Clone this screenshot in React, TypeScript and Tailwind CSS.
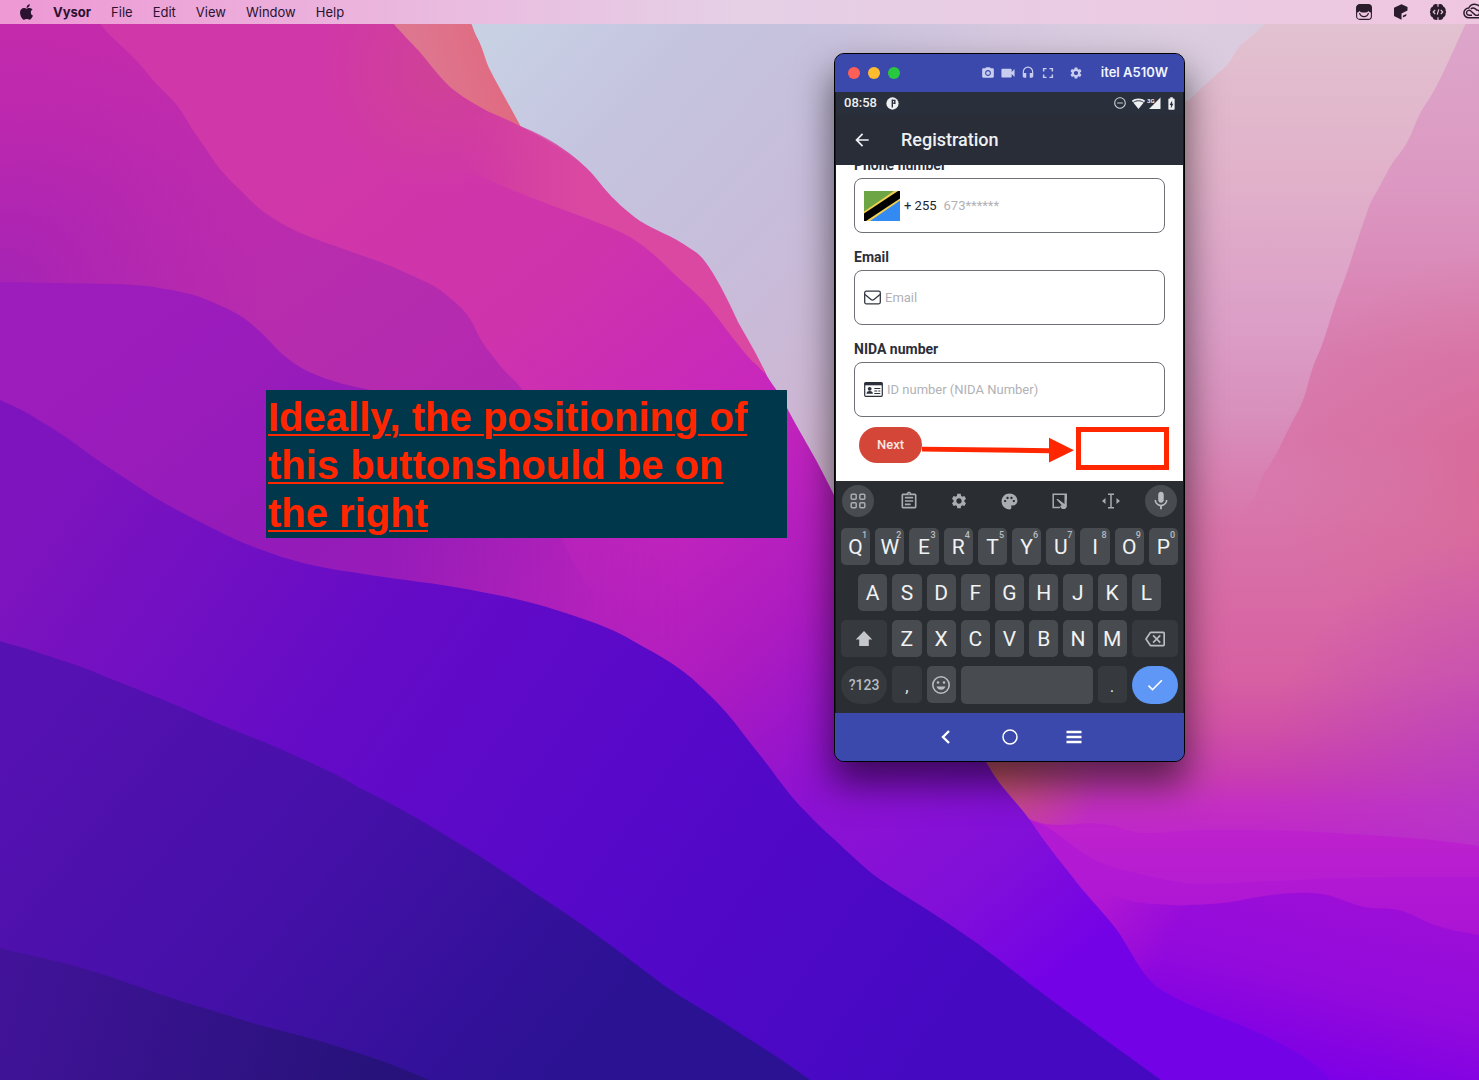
import React from "react";
import { FaApple } from "react-icons/fa";
import {
  MdArrowBack,
  MdBatteryChargingFull,
  MdCheck,
  MdFullscreen,
  MdHeadset,
  MdMic,
  MdOutlineAssignment,
  MdOutlineBackspace,
  MdPalette,
  MdPhotoCamera,
  MdRemoveCircleOutline,
  MdSettings,
  MdVideocam,
} from "react-icons/md";

const plumPath =
  "M0 0H80C92 14 100 24 108 33C124 49 136 58 148 74C162 92 174 98 185 117C194 133 202 142 212 158C222 174 235 184 249 199C264 214 280 223 296 231C313 239 331 244 349 251C368 258 386 263 402 271C420 279 438 286 450 298C462 308 469 315 474 326C483 346 490 352 498 363C508 376 516 380 524 392C540 420 540 500 561 538C572 560 590 600 640 640H0Z";

function Wallpaper() {
  return (
    <svg
      aria-hidden="true"
      className="absolute inset-0 h-full w-full"
      viewBox="0 0 1479 1080"
      preserveAspectRatio="xMidYMid slice"
    >
      <defs>
        <linearGradient id="sky" gradientUnits="userSpaceOnUse" x1="520" y1="20" x2="1180" y2="640">
          <stop offset="0" stopColor="#c8d0e4" />
          <stop offset="0.15" stopColor="#c5c4df" />
          <stop offset="0.35" stopColor="#c7bddb" />
          <stop offset="0.6" stopColor="#d0b4d0" />
          <stop offset="1" stopColor="#cf7db4" />
        </linearGradient>
        <radialGradient id="haze" gradientUnits="userSpaceOnUse" cx="1180" cy="10" r="380">
          <stop offset="0" stopColor="#dccfe0" />
          <stop offset="0.4" stopColor="#dccfe2" stopOpacity="0.7" />
          <stop offset="1" stopColor="#ded3e4" stopOpacity="0" />
        </radialGradient>
        <linearGradient id="rose" gradientUnits="userSpaceOnUse" x1="0" y1="20" x2="0" y2="1080">
          <stop offset="0" stopColor="#e2c2d0" />
          <stop offset="0.14" stopColor="#e1b2ca" />
          <stop offset="0.28" stopColor="#dc9fc7" />
          <stop offset="0.37" stopColor="#d890bc" />
          <stop offset="0.48" stopColor="#d873a9" />
          <stop offset="0.62" stopColor="#d760a2" />
          <stop offset="0.67" stopColor="#d050a6" />
          <stop offset="0.715" stopColor="#c83cb2" />
          <stop offset="0.74" stopColor="#c42fc2" />
          <stop offset="0.8" stopColor="#b81fd0" />
          <stop offset="1" stopColor="#7c00e6" />
        </linearGradient>
        <linearGradient id="slope" gradientUnits="userSpaceOnUse" x1="0" y1="20" x2="0" y2="860">
          <stop offset="0" stopColor="#dda6ca" />
          <stop offset="0.2" stopColor="#dc98c2" />
          <stop offset="0.4" stopColor="#d87bae" />
          <stop offset="0.5" stopColor="#d874a9" stopOpacity="0.9" />
          <stop offset="0.6" stopColor="#d76ba5" stopOpacity="0" />
        </linearGradient>
        <radialGradient id="blush" gradientUnits="userSpaceOnUse" cx="1510" cy="480" r="230">
          <stop offset="0" stopColor="#d85c84" stopOpacity="0.55" />
          <stop offset="0.5" stopColor="#d8608c" stopOpacity="0.25" />
          <stop offset="1" stopColor="#d8607f" stopOpacity="0" />
        </radialGradient>
        <radialGradient id="violetEdge" gradientUnits="userSpaceOnUse" cx="1520" cy="790" r="260">
          <stop offset="0" stopColor="#b43cc8" stopOpacity="0.7" />
          <stop offset="1" stopColor="#b43cc8" stopOpacity="0" />
        </radialGradient>
        <radialGradient id="ember" gradientUnits="userSpaceOnUse" cx="1000" cy="770" r="100">
          <stop offset="0" stopColor="#cf5a68" stopOpacity="0.9" />
          <stop offset="1" stopColor="#cf5a78" stopOpacity="0" />
        </radialGradient>
        <linearGradient id="dune" gradientUnits="userSpaceOnUse" x1="0" y1="820" x2="0" y2="900">
          <stop offset="0" stopColor="#bf22cc" />
          <stop offset="1" stopColor="#b41cd3" />
        </linearGradient>
        <linearGradient id="dune2" gradientUnits="userSpaceOnUse" x1="0" y1="870" x2="0" y2="940">
          <stop offset="0" stopColor="#b018d4" stopOpacity="0.8" />
          <stop offset="1" stopColor="#ac14d4" />
        </linearGradient>
        <linearGradient id="dune3" gradientUnits="userSpaceOnUse" x1="1300" y1="893" x2="1260" y2="1060">
          <stop offset="0" stopColor="#9c0ed8" />
          <stop offset="0.5" stopColor="#920adc" />
          <stop offset="1" stopColor="#7e00e6" />
        </linearGradient>
        <linearGradient id="duneFade" gradientUnits="userSpaceOnUse" x1="1100" y1="910" x2="1170" y2="945">
          <stop offset="0" stopColor="#fff" stopOpacity="0" />
          <stop offset="1" stopColor="#fff" />
        </linearGradient>
        <mask id="duneMask">
          <rect width="1479" height="1080" fill="url(#duneFade)" />
        </mask>
        <linearGradient id="mass" gradientUnits="userSpaceOnUse" x1="420" y1="100" x2="1150" y2="1000">
          <stop offset="0" stopColor="#d037a8" />
          <stop offset="0.2" stopColor="#cf33ac" />
          <stop offset="0.38" stopColor="#c827bc" />
          <stop offset="0.55" stopColor="#ac1bc0" />
          <stop offset="0.68" stopColor="#8d12d2" />
          <stop offset="0.82" stopColor="#8210d8" />
          <stop offset="0.93" stopColor="#7402e6" />
        </linearGradient>
        <linearGradient id="coral" gradientUnits="userSpaceOnUse" x1="420" y1="60" x2="500" y2="40">
          <stop offset="0" stopColor="#de7690" />
          <stop offset="1" stopColor="#e06a80" />
        </linearGradient>
        <linearGradient id="ridge" gradientUnits="userSpaceOnUse" x1="455" y1="165" x2="580" y2="165">
          <stop offset="0" stopColor="#d4409c" stopOpacity="0" />
          <stop offset="0.5" stopColor="#d6459d" stopOpacity="0.7" />
          <stop offset="1" stopColor="#da48a2" />
        </linearGradient>
        <radialGradient id="warmTop" gradientUnits="userSpaceOnUse" cx="440" cy="70" r="120">
          <stop offset="0" stopColor="#cf4592" stopOpacity="0.8" />
          <stop offset="1" stopColor="#cf4592" stopOpacity="0" />
        </radialGradient>
        <linearGradient id="plum" gradientUnits="userSpaceOnUse" x1="120" y1="40" x2="560" y2="640">
          <stop offset="0" stopColor="#c42bac" />
          <stop offset="0.5" stopColor="#b52cae" />
          <stop offset="0.8" stopColor="#b425b2" />
          <stop offset="1" stopColor="#aa1cba" stopOpacity="0" />
        </linearGradient>
        <radialGradient id="plumShade" gradientUnits="userSpaceOnUse" cx="0" cy="290" r="270">
          <stop offset="0" stopColor="#9a20b8" stopOpacity="0.7" />
          <stop offset="1" stopColor="#a91fb4" stopOpacity="0" />
        </radialGradient>
        <linearGradient id="grape" gradientUnits="userSpaceOnUse" x1="150" y1="285" x2="420" y2="640">
          <stop offset="0" stopColor="#9d1cbc" />
          <stop offset="0.6" stopColor="#941bb9" />
          <stop offset="1" stopColor="#991cba" />
        </linearGradient>
        <linearGradient id="grapeFade" gradientUnits="userSpaceOnUse" x1="380" y1="0" x2="680" y2="0">
          <stop offset="0" stopColor="#fff" />
          <stop offset="1" stopColor="#fff" stopOpacity="0" />
        </linearGradient>
        <mask id="grapeMask">
          <rect width="1479" height="1080" fill="url(#grapeFade)" />
        </mask>
        <linearGradient id="indigo" gradientUnits="userSpaceOnUse" x1="60" y1="480" x2="900" y2="1080">
          <stop offset="0" stopColor="#7e14be" />
          <stop offset="0.35" stopColor="#640bc7" />
          <stop offset="0.65" stopColor="#5608c9" />
          <stop offset="1" stopColor="#4609c2" />
        </linearGradient>
        <linearGradient id="navy" gradientUnits="userSpaceOnUse" x1="60" y1="660" x2="560" y2="1080">
          <stop offset="0" stopColor="#5611b2" />
          <stop offset="0.5" stopColor="#4510a8" />
          <stop offset="1" stopColor="#2a1292" />
        </linearGradient>
        <linearGradient id="midnight" gradientUnits="userSpaceOnUse" x1="0" y1="960" x2="380" y2="1080">
          <stop offset="0" stopColor="#421399" />
          <stop offset="1" stopColor="#26127a" />
        </linearGradient>
      </defs>

      <rect width="1479" height="1080" fill="url(#sky)" />
      <rect x="780" width="699" height="400" fill="url(#haze)" />
      <path
        d="M1270 20C1258 30 1250 38 1243 43S1232 62 1223 69S1202 88 1190 99C1100 150 920 240 900 400V1080H1479V0H1280Z"
        fill="url(#rose)"
      />
      <path
        d="M1470 15C1455 45 1440 84 1427 102S1413 137 1400 153S1386 176 1377 191S1369 208 1363 224S1348 272 1340 291S1326 338 1317 357S1308 394 1297 413S1279 452 1267 469S1262 490 1247 508S1225 535 1200 560V860H1479V15Z"
        fill="url(#slope)"
      />
      <rect x="1200" y="200" width="279" height="520" fill="url(#blush)" />
      <rect x="1200" y="500" width="279" height="560" fill="url(#violetEdge)" />
      <rect x="880" y="660" width="240" height="220" fill="url(#ember)" />
      <path
        d="M1000 800C1030 824 1045 825 1060 825C1080 825 1090 822 1103 824C1122 826 1128 833 1146 833C1168 833 1180 830 1211 830C1260 830 1280 830 1320 832C1380 836 1430 838 1479 846V1080H1000Z"
        fill="url(#dune)"
      />
      <path
        d="M1030 820C1050 826 1060 836 1068 842C1086 856 1100 864 1120 869C1150 876 1175 884 1207 884C1270 882 1340 876 1406 877H1479V1080H1030Z"
        fill="url(#dune2)"
      />
      <path
        d="M1090 885C1110 898 1140 904 1155 904C1170 905 1180 906 1190 905C1210 904 1220 904 1237 901C1260 896 1290 892 1311 893C1325 894 1328 895 1337 898C1350 903 1360 907 1372 908C1385 909 1392 908 1402 911C1414 915 1420 919 1432 924C1448 930 1462 932 1479 935V1080H1090Z"
        fill="url(#dune3)"
        mask="url(#duneMask)"
      />
      <path
        d="M0 0H460C468 15 472 28 476 36C483 48 484 60 489 72C498 94 511 112 520 126C536 134 553 143 569 155C583 166 592 174 603 189C614 202 626 213 640 223C656 233 673 238 688 249C697 256 703 260 709 269C720 286 728 303 738 325C748 346 757 356 765 372C771 384 776 388 783 400C800 434 812 450 830 487C870 570 940 680 986 762C1003 792 1018 802 1034 826C1050 850 1063 864 1077 883C1090 899 1103 912 1117 930C1132 952 1138 970 1157 987C1178 1001 1200 1009 1233 1022C1290 1045 1320 1065 1330 1080H0Z"
        fill="url(#mass)"
      />
      <path
        d="M300 0H375C392 24 405 36 418 50C430 64 437 74 450 87C462 97 473 103 487 111L520 126L603 200L560 260H300Z"
        fill="url(#warmTop)"
      />
      <path
        d="M375 0C392 24 405 36 418 50C430 64 437 74 450 87C462 97 473 103 487 111C500 117 511 121 521 127C511 108 498 86 489 68C484 56 483 48 476 36C472 26 468 12 460 0Z"
        fill="url(#coral)"
      />
      <path
        d="M430 130C440 150 462 170 487 179C510 190 536 199 561 209C588 219 610 226 630 237C643 245 655 255 667 267C683 283 695 291 709 307C725 327 738 346 752 361C758 366 762 371 766 374C756 352 748 340 738 322C728 300 720 284 709 267C700 254 696 252 688 247C673 236 656 231 640 221C626 211 614 200 603 187C592 172 583 164 569 153C553 141 536 132 520 126C505 119 495 115 487 111Z"
        fill="url(#ridge)"
      />
      <path d={plumPath} fill="url(#plum)" />
      <path d={plumPath} fill="url(#plumShade)" />
      <path
        d="M0 282C18 282 35 283 53 283C75 283 95 284 116 284C132 285 145 285 159 288C178 291 195 294 212 302C226 308 238 313 249 322C260 331 265 336 275 347C286 358 294 364 307 371C330 382 355 387 376 391L680 520V640H0Z"
        fill="url(#grape)"
        mask="url(#grapeMask)"
      />
      <path
        d="M0 400C12 406 22 409 32 416C52 428 67 437 85 451C105 466 124 477 143 490C166 505 188 516 212 528C230 537 247 545 265 551C275 555 285 558 296 561C320 568 346 571 370 575C402 580 435 583 466 589C497 595 527 600 556 610C584 619 611 627 635 642C660 656 681 667 699 685C716 701 729 714 741 731C754 748 766 762 778 779C788 792 792 797 800 806C812 818 822 829 835 840C849 853 863 867 878 878C899 893 921 905 943 920C959 931 975 941 990 953C1008 966 1024 980 1042 993C1062 1008 1083 1023 1103 1038C1122 1052 1142 1066 1161 1080H0Z"
        fill="url(#indigo)"
      />
      <path
        d="M0 641C14 646 28 648 42 654C64 661 85 667 106 677C142 691 177 705 212 721C240 733 269 743 296 756C318 766 339 775 360 788C391 803 421 820 450 838C477 854 503 871 529 889C553 905 575 919 598 936C620 952 641 968 662 984C688 1002 715 1016 741 1034C765 1049 788 1064 810 1080H0Z"
        fill="url(#navy)"
      />
      <path
        d="M0 948C32 956 64 962 95 972C117 979 138 986 159 994C189 1004 219 1012 249 1022C279 1031 310 1037 339 1047C370 1056 400 1067 429 1080H0Z"
        fill="url(#midnight)"
      />
    </svg>
  );
}

const menus = ["File", "Edit", "View", "Window", "Help"];

function MenuBar() {
  return (
    <header className="relative flex h-6 items-center justify-between overflow-hidden bg-linear-to-r from-[#ee98d4] via-[#e5d0e6] to-[#efc6e0] pl-5 text-[13px] text-[#2a1230]">
      <nav aria-label="Menu bar" className="flex items-center gap-5 pt-0.5">
        <button aria-label="Apple menu" className="pb-0.5">
          <FaApple className="h-4 w-[13px] scale-110" />
        </button>
        <button className="font-bold">Vysor</button>
        {menus.map((m) => (
          <button key={m}>{m}</button>
        ))}
      </nav>
      <div className="-mr-1.5 flex items-center gap-5 text-[#2b1c2c]">
        <button aria-label="Cat utility">
          <svg width="18" height="18" viewBox="0 0 18 18">
            <rect x="1.6" y="1.6" width="14.8" height="14.8" rx="3.2" fill="none" stroke="currentColor" strokeWidth="1.1" />
            <path
              d="M1.5 9.500V4.800A3.300 3.300 0 0 1 4.800 1.500h8.400a3.300 3.300 0 0 1 3.300 3.300V9.500c-1.400 0-2-.4-3-1.500-1 1-2 1.500-4.500 1.500S5.500 9 4.500 8C3.500 9.100 2.900 9.500 1.500 9.500Z"
              fill="currentColor"
            />
            <path d="M4.500 10c.8 2.600 2.500 3.700 4.500 3.700s3.700-1.100 4.500-3.700" fill="none" stroke="currentColor" strokeWidth="1.200" />
          </svg>
        </button>
        <button aria-label="Box utility">
          <svg width="16" height="18" viewBox="0 0 16 18">
            <path d="M1 4.800 8.500 1.200l6 2.800v3.500L8.500 10.500v6.300L1 13Z" fill="currentColor" />
            <path d="m9.800 14.600.3-2 3.400-1.600-.4 1.900Z" fill="currentColor" />
          </svg>
        </button>
        <button aria-label="Developer utility">
          <svg width="18" height="18" viewBox="0 0 18 18">
            <path
              d="M6 1.200c1.300-.4 2.300 0 3 .8.700-.8 1.700-1.200 3-.8 1.300.3 2 1.200 2.200 2.300C16 4.300 17 5.900 16.500 7.500c.8 1 .8 2 0 3 .5 1.600-.5 3.200-2.300 4-.2 1.100-.9 2-2.200 2.300-1.300.4-2.300 0-3-.8-.7.8-1.700 1.200-3 .8-1.300-.3-2-1.200-2.200-2.300-1.800-.8-2.800-2.400-2.300-4-.8-1-.8-2 0-3C1 5.900 2 4.300 3.800 3.500 4 2.400 4.700 1.500 6 1.200Z"
              fill="currentColor"
            />
            <path
              d="M6.200 7 4.200 9l2 2M11.800 7l2 2-2 2M9.800 6.300l-1.600 5.400M9 1.800v2M9 14.200v2"
              fill="none"
              stroke="#eecbe1"
              strokeWidth="1.100"
            />
          </svg>
        </button>
        <button aria-label="Creative Cloud" className="-ml-1">
          <svg width="22" height="18" viewBox="0 0 22 18" fill="none" stroke="currentColor">
            <path
              d="M5.800 14.800A4.900 4.900 0 0 1 5.800 5 6.800 6.800 0 0 1 18.500 7a4 4 0 0 1-1 7.800Z"
              strokeWidth="1.500"
            />
            <path
              d="M9 12.300H6a2.500 2.500 0 1 1 1.800-4.300l4 3.600c2 1.500 4.800.8 4.800-1.800 0-2-1.400-3-3.200-2.800M7.800 5.800c2.400-1.600 5-.5 6 1.600"
              strokeWidth="1.400"
            />
          </svg>
        </button>
      </div>
    </header>
  );
}

function TitleBar() {
  return (
    <div className="flex h-[38px] items-center bg-[#3a49ab] pr-4 pl-[13px]">
      <div className="flex gap-2">
        <button aria-label="Close" className="size-3 rounded-full bg-[#ff5f57]" />
        <button aria-label="Minimize" className="size-3 rounded-full bg-[#febc2e]" />
        <button aria-label="Zoom" className="size-3 rounded-full bg-[#28c840]" />
      </div>
      <div className="ml-auto flex items-center gap-1.5 text-[#c9cef0]">
        <button aria-label="Screenshot">
          <MdPhotoCamera size={14} />
        </button>
        <button aria-label="Record">
          <MdVideocam className="scale-125" size={14} />
        </button>
        <button aria-label="Audio">
          <MdHeadset size={14} />
        </button>
        <button aria-label="Full screen">
          <MdFullscreen className="scale-125" size={14} />
        </button>
        <button aria-label="Settings" className="ml-2">
          <MdSettings size={14} />
        </button>
      </div>
      <span className="ml-[18px] text-[13px] font-semibold text-[#f2f4ff]">itel A510W</span>
    </div>
  );
}

function StatusBar() {
  return (
    <div className="flex h-[22px] items-center bg-[#2a303b] pr-1 pl-2 text-[13px] font-medium text-[#eef0f2]">
      <span>08:58</span>
      <svg className="ml-[9px]" width="13" height="13" viewBox="0 0 14 14" aria-label="Notification">
        <circle cx="7" cy="7" r="6.600" fill="#eef0f2" />
        <path d="M6.800 2.800v8.400M6.800 3.600h2.700v3.200H7.800" fill="none" stroke="#2a303b" strokeWidth="1.500" />
      </svg>
      <div className="ml-auto flex items-center gap-1">
        <MdRemoveCircleOutline className="text-[#c3c7cc]" size={14} />
        <div className="flex items-center">
          <svg width="15" height="13" viewBox="0 0 15 13" aria-label="Wi-Fi">
            <path d="M7.500 12 .800 3.800C4.600.700 10.400.700 14.200 3.800Z" fill="#eef0f2" />
            <path d="M2.300 5.400c3-2.200 7.400-2.200 10.400 0" fill="none" stroke="#2a303b" strokeWidth="1" />
          </svg>
          <svg className="ml-px" width="14" height="13" viewBox="0 0 14 13" aria-label="Signal">
            <path d="M2 12 13.500.600V12Z" fill="#eef0f2" />
            <rect x="0" y="0" width="7" height="6" fill="#2a303b" />
            <text x="0" y="6" fontSize="6" fontWeight="700" fill="#eef0f2">
              3G
            </text>
          </svg>
        </div>
        <MdBatteryChargingFull className="-ml-px" size={15} />
      </div>
    </div>
  );
}

function FlagTanzania() {
  return (
    <svg width="36" height="30" viewBox="0 0 36 30" aria-label="Tanzania">
      <path d="M0 0h36v30H0Z" fill="#6ea544" />
      <path d="M36 0v30H0Z" fill="#338af3" />
      <path d="M0 30v-9.500L30 0h6v9.500L6 30Z" fill="#f2cf52" />
      <path d="M0 30v-7.500L34 0h2v7.500L2 30Z" fill="#000" />
    </svg>
  );
}

function IdCard() {
  return (
    <svg width="19" height="15" viewBox="0 0 19 15" aria-hidden="true">
      <rect x="0.700" y="0.700" width="17.600" height="13.600" rx="1" fill="none" stroke="#2b303b" strokeWidth="1.200" />
      <path d="M.5.800h18v2.500H.5Z" fill="#2b303b" />
      <circle cx="5.700" cy="6.800" r="1.900" fill="#2b303b" />
      <path d="M2.500 11.800c0-1.900 1-2.900 3.200-2.900s3.200 1 3.200 2.900Z" fill="#2b303b" />
      <path d="M10.300 6.500h6M10.300 9h3M14.300 9h2M10.300 11.500h6" stroke="#2b303b" strokeWidth="1.200" />
    </svg>
  );
}

function Field({
  id,
  label,
  placeholder,
  type,
  lead,
}: {
  id: string;
  label: string;
  placeholder: string;
  type: string;
  lead: React.ReactNode;
}) {
  return (
    <div>
      <label htmlFor={id} className="mb-0.5 block text-[14px] leading-[22px] font-bold text-[#2b2f3a]">
        {label}
      </label>
      <div className="flex h-[55px] items-center rounded-lg border border-[#6d7076] px-[9px]">
        {lead}
        <input
          id={id}
          type={type}
          placeholder={placeholder}
          className="min-w-0 flex-1 bg-transparent text-[13px] text-[#2b2f3a] outline-none placeholder:text-[#b0b2b6]"
        />
      </div>
    </div>
  );
}

function RegistrationForm() {
  return (
    <div className="h-[316px] overflow-hidden bg-white">
      <form className="-mt-[11px] px-[18px]" onSubmit={(e) => e.preventDefault()}>
        <div className="flex flex-col gap-[13px]">
          <Field
            id="phone"
            label="Phone number"
            type="tel"
            placeholder="673******"
            lead={
              <>
                <FlagTanzania />
                <span className="mr-[7px] ml-1 text-[13px] text-[#22252c]">+ 255</span>
              </>
            }
          />
          <Field
            id="email"
            label="Email"
            type="email"
            placeholder="Email"
            lead={
              <svg
                className="mr-1"
                width="17"
                height="15"
                viewBox="0 0 17 15"
                fill="none"
                stroke="#33373f"
                strokeWidth="1.300"
                aria-hidden="true"
              >
                <rect x="0.700" y="1.200" width="15.600" height="12.600" rx="1.500" />
                <path d="m1 4.500 6 5c1 .8 2 .8 3 0l6-5" />
              </svg>
            }
          />
          <Field
            id="nida"
            label="NIDA number"
            type="text"
            placeholder="ID number (NIDA Number)"
            lead={
              <span className="mr-1">
                <IdCard />
              </span>
            }
          />
        </div>
        <button
          type="submit"
          className="mt-2.5 ml-[5px] flex h-9 w-[63px] items-center justify-center rounded-full bg-[#d44638] text-[13px] font-medium text-[#fae6e3]"
        >
          Next
        </button>
      </form>
    </div>
  );
}

const topRow = ["Q", "W", "E", "R", "T", "Y", "U", "I", "O", "P"];
const homeRow = ["A", "S", "D", "F", "G", "H", "J", "K", "L"];
const bottomRow = ["Z", "X", "C", "V", "B", "N", "M"];

const letterKey =
  "relative col-span-2 flex h-[37px] items-center justify-center rounded-[5px] bg-[#484c50] pt-0.5 text-[21px] text-[#f1f2f3]";
const darkKey = "flex h-[37px] items-center justify-center rounded-[5px] bg-[#363a3f] text-[#b9bcc0]";

function Keyboard() {
  return (
    <div className="flex h-[232px] flex-col bg-[#2a2e33] px-[5px] pt-1">
      <div className="flex items-center justify-between px-px text-[#a9adb2]">
        <button aria-label="Features" className="flex size-8 items-center justify-center rounded-full bg-[#484c50]">
          <svg width="16" height="16" viewBox="0 0 16 16" fill="none" stroke="currentColor" strokeWidth="1.500">
            <rect x="1.200" y="1.200" width="5" height="5" rx="1" />
            <rect x="9.800" y="1.200" width="5" height="5" rx="1" />
            <rect x="1.200" y="9.800" width="5" height="5" rx="1" />
            <rect x="9.800" y="9.800" width="5" height="5" rx="1" />
          </svg>
        </button>
        <button aria-label="Clipboard" className="flex size-8 items-center justify-center">
          <MdOutlineAssignment size={20} />
        </button>
        <button aria-label="Keyboard settings" className="flex size-8 items-center justify-center">
          <MdSettings size={18} />
        </button>
        <button aria-label="Themes" className="flex size-8 items-center justify-center">
          <MdPalette size={19} />
        </button>
        <button aria-label="One-handed" className="flex size-8 items-center justify-center">
          <svg width="18" height="18" viewBox="0 0 18 18">
            <path d="M9 15.500H2.200V2.200h13V8" fill="none" stroke="currentColor" strokeWidth="1.500" />
            <path d="M5.500 7.500c.8-.8 1.600-.6 2.400.2L13.500 12V2.200h2.300V15L14 17h-3L8.800 14l2-.8Z" fill="currentColor" />
          </svg>
        </button>
        <button aria-label="Text editing" className="flex size-8 items-center justify-center">
          <svg width="20" height="18" viewBox="0 0 20 18">
            <path d="M7 2.200h6M7 15.800h6M10 2.200v13.600" fill="none" stroke="currentColor" strokeWidth="1.500" />
            <path d="M4.500 6v6l-3.500-3ZM15.500 6v6L19 9Z" fill="currentColor" />
          </svg>
        </button>
        <button
          aria-label="Voice input"
          className="flex size-8 items-center justify-center rounded-full bg-[#484c50] text-[#b9bcc0]"
        >
          <MdMic size={22} />
        </button>
      </div>
      <div className="mt-[11px] grid grid-cols-20 gap-x-[5px] gap-y-[9px]">
        {topRow.map((k, i) => (
          <button key={k} className={letterKey}>
            {k}
            <span className="absolute top-0.5 right-[3px] text-[9px] leading-[11px] font-medium text-[#b9bcc0]">
              {(i + 1) % 10}
            </span>
          </button>
        ))}
        <span />
        {homeRow.map((k) => (
          <button key={k} className={letterKey}>
            {k}
          </button>
        ))}
        <span />
        <button aria-label="Shift" className={`${darkKey} col-span-3`}>
          <svg width="18" height="18" viewBox="0 0 18 18">
            <path d="M9 1 17.200 9.500h-3.400V16H4.200V9.500H.8Z" fill="#c4c6c9" />
          </svg>
        </button>
        {bottomRow.map((k) => (
          <button key={k} className={letterKey}>
            {k}
          </button>
        ))}
        <button aria-label="Backspace" className={`${darkKey} col-span-3`}>
          <MdOutlineBackspace size={20} />
        </button>
        <button className="col-span-3 flex h-[38px] items-center justify-center rounded-full bg-[#363a3f] text-[14px] font-medium text-[#b9bcc0]">
          ?123
        </button>
        <button className={`${darkKey} col-span-2 pt-1 text-[17px] text-[#e4e5e7]`}>,</button>
        <button aria-label="Emoji" className="col-span-2 flex h-[37px] items-center justify-center rounded-[5px] bg-[#484c50]">
          <svg width="20" height="20" viewBox="0 0 20 20">
            <circle cx="10" cy="10" r="8.200" fill="none" stroke="#b9bcc0" strokeWidth="1.600" />
            <circle cx="7" cy="7.500" r="1.300" fill="#b9bcc0" />
            <circle cx="13" cy="7.500" r="1.300" fill="#b9bcc0" />
            <path d="M5.500 11.500h9c-.6 2-2.300 3.300-4.500 3.300s-3.900-1.300-4.500-3.300Z" fill="#b9bcc0" />
          </svg>
        </button>
        <button aria-label="Space" className="col-span-8 h-[38px] rounded-[5px] bg-[#484c50]" />
        <button className={`${darkKey} col-span-2 pt-1 text-[17px] text-[#e4e5e7]`}>.</button>
        <button
          aria-label="Done"
          className="col-span-3 flex h-[38px] items-center justify-center rounded-full bg-[#5e97f6] text-white"
        >
          <MdCheck size={20} />
        </button>
      </div>
    </div>
  );
}

function PhoneWindow() {
  return (
    <section
      aria-label="itel A510W"
      className="absolute top-[53px] left-[834px] w-[351px] overflow-hidden rounded-[10px] border border-black bg-[#3a49ab] shadow-[0_20px_36px_2px_rgba(0,0,0,0.55)]"
    >
      <TitleBar />
      <div className="border-x border-[#16191d] font-['Roboto',sans-serif]">
        <StatusBar />
        <div className="flex h-[51px] items-center bg-[#282d38] pl-4 text-[#eef0f2]">
          <button aria-label="Back">
            <MdArrowBack size={20} />
          </button>
          <h1 className="ml-[29px] text-[18px] font-medium">Registration</h1>
        </div>
        <RegistrationForm />
        <Keyboard />
      </div>
      <div className="flex h-12 items-center justify-center gap-12 bg-[#3a49ab] text-white">
        <button aria-label="Back">
          <svg width="16" height="16" viewBox="0 0 16 16">
            <path d="M11 2 5 8l6 6" fill="none" stroke="currentColor" strokeWidth="2.400" />
          </svg>
        </button>
        <button aria-label="Home">
          <svg width="16" height="16" viewBox="0 0 16 16">
            <circle cx="8" cy="8" r="7" fill="none" stroke="currentColor" strokeWidth="1.500" />
          </svg>
        </button>
        <button aria-label="Recent apps">
          <svg width="16" height="16" viewBox="0 0 16 16">
            <path d="M.5 3h15M.5 8h15M.5 13h15" fill="none" stroke="currentColor" strokeWidth="2.400" />
          </svg>
        </button>
      </div>
    </section>
  );
}

export default function App() {
  return (
    <div className="relative min-h-screen overflow-hidden font-['Inter',sans-serif]">
      <Wallpaper />
      <MenuBar />
      <main>
        <PhoneWindow />
        <p className="absolute top-[390px] left-[266px] w-[521px] bg-[#01374a] px-0.5 pt-[3px] pb-px font-['Liberation_Sans',Arial,sans-serif] text-[40px] leading-[48px] font-bold text-[#ff2600] underline decoration-2 underline-offset-3">
          Ideally, the positioning of this buttonshould be on the right
        </p>
        <svg
          aria-hidden="true"
          className="absolute top-[437px] left-[922px]"
          width="153"
          height="26"
          viewBox="0 0 153 26"
          fill="#ff2600"
        >
          <path d="M0 9.800 127 11.200v5L0 14.500ZM127 .800 152 13.200 127 25.500Z" />
        </svg>
        <div aria-hidden="true" className="absolute top-[427px] left-[1076px] h-[43px] w-[93px] border-5 border-[#ff2600]" />
      </main>
    </div>
  );
}
